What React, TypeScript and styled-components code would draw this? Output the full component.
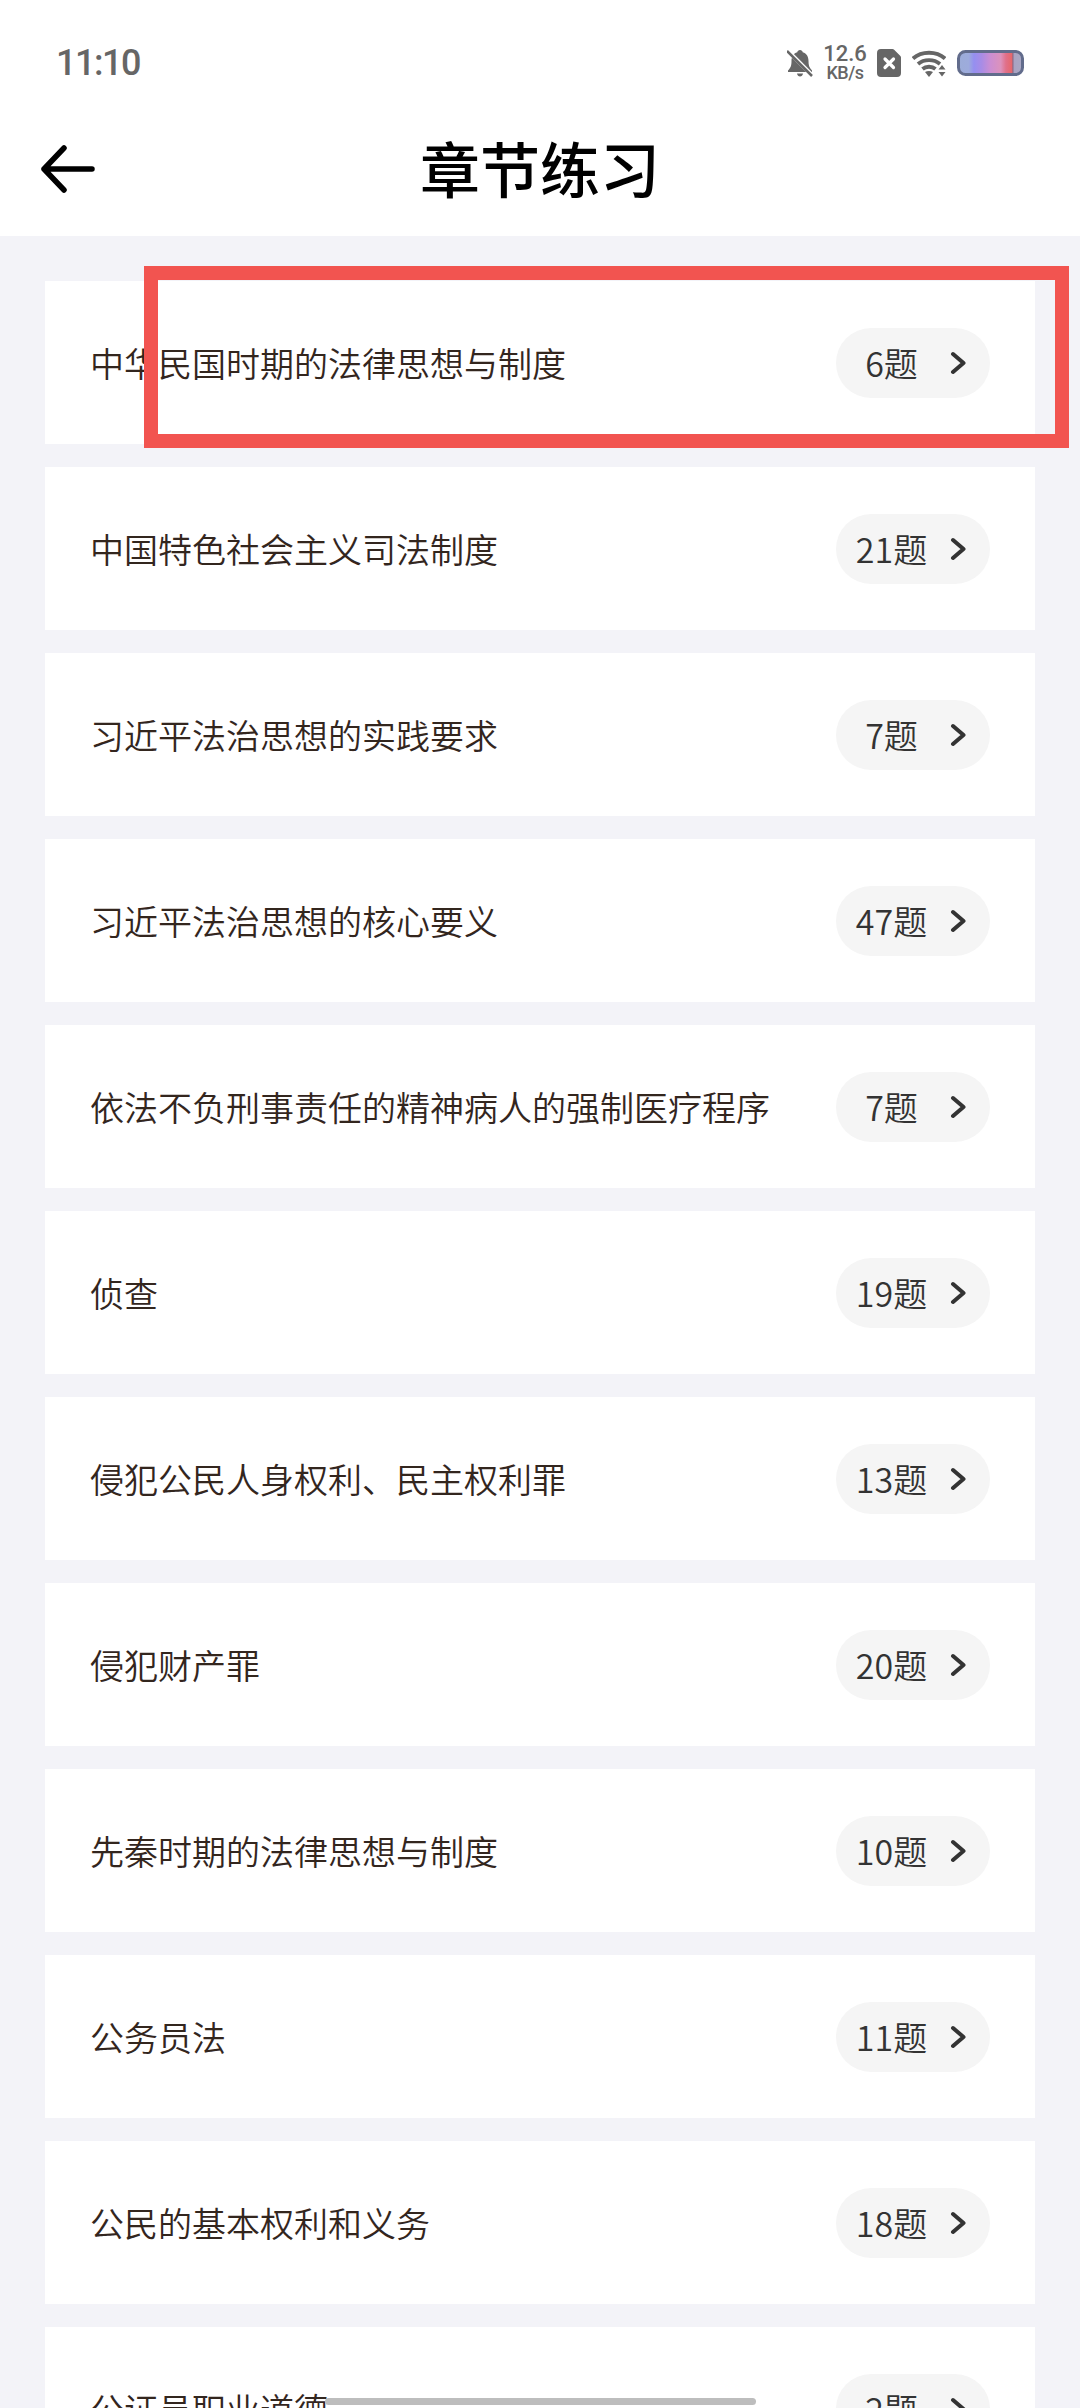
import React, { FC } from "react";
import styled, { createGlobalStyle } from "styled-components";

const GlobalStyle = createGlobalStyle`
  html, body {
    margin: 0;
    padding: 0;
    background: #f3f3f8;
  }
  body {
    font-family: "Noto Sans CJK SC", "Noto Sans", sans-serif;
  }
`;

const Page = styled.div`
  position: relative;
  width: 1080px;
  height: 2408px;
  overflow: hidden;
  background: #f3f3f8;
`;

const Top = styled.header`
  background: #fff;
  height: 236px;
  display: flex;
  flex-direction: column;
`;

const StatusBar = styled.div`
  height: 104px;
  padding: 22px 56px 0 56px;
  box-sizing: border-box;
  display: flex;
  align-items: center;
  justify-content: space-between;
`;

const Time = styled.span`
  font-family: "Roboto", sans-serif;
  font-size: 36px;
  font-weight: 500;
  letter-spacing: -1.5px;
  color: #666;
`;

const StatusIcons = styled.div`
  display: flex;
  align-items: center;
  gap: 11px;
`;

const Speed = styled.div`
  width: 42px;
  display: flex;
  flex-direction: column;
  align-items: center;
  font-family: "Roboto", sans-serif;
  font-weight: 500;
  color: #666;
  line-height: 19px;
`;

const SpeedValue = styled.span`
  font-size: 22px;
`;

const SpeedUnit = styled.span`
  font-size: 18px;
  letter-spacing: -0.5px;
`;

const TitleBar = styled.div`
  flex: 1;
  display: flex;
  align-items: center;
  justify-content: center;
  position: relative;
  padding-bottom: 8px;
`;

const BackButton = styled.div`
  position: absolute;
  left: 40px;
  top: 41px;
  width: 56px;
  height: 48px;
`;

const Title = styled.h1`
  margin: 0;
  font-size: 60px;
  font-weight: 500;
  color: #000;
`;

const List = styled.div`
  padding: 45px 45px 0;
  display: flex;
  flex-direction: column;
  gap: 23px;
`;

const Row = styled.div`
  height: 163px;
  flex-shrink: 0;
  background: #fff;
  display: flex;
  align-items: center;
  justify-content: space-between;
  padding: 0 45px 0 45px;
`;

const RowLabel = styled.span`
  font-size: 34px;
  font-weight: 350;
  color: #33261e;
`;

const Pill = styled.div`
  width: 154px;
  height: 70px;
  border-radius: 35px;
  background: #f5f5f5;
  display: flex;
  align-items: center;
`;

const Count = styled.span`
  width: 111px;
  margin-right: 3px;
  text-align: center;
  font-size: 34px;
  font-weight: 350;
  color: #333;
`;

const RedFrame = styled.div`
  position: absolute;
  left: 144px;
  top: 266px;
  width: 925px;
  height: 182px;
  box-sizing: border-box;
  border: 14px solid #f25450;
`;

const HomeBar = styled.div`
  position: absolute;
  left: 325px;
  top: 2398px;
  width: 431px;
  height: 7px;
  border-radius: 4px;
  background: #bdbdbd;
`;

const chapters = [
  { name: "中华民国时期的法律思想与制度", count: 6 },
  { name: "中国特色社会主义司法制度", count: 21 },
  { name: "习近平法治思想的实践要求", count: 7 },
  { name: "习近平法治思想的核心要义", count: 47 },
  { name: "依法不负刑事责任的精神病人的强制医疗程序", count: 7 },
  { name: "侦查", count: 19 },
  { name: "侵犯公民人身权利、民主权利罪", count: 13 },
  { name: "侵犯财产罪", count: 20 },
  { name: "先秦时期的法律思想与制度", count: 10 },
  { name: "公务员法", count: 11 },
  { name: "公民的基本权利和义务", count: 18 },
  { name: "公证员职业道德", count: 2 },
];

const Chevron: FC = () => (
  <svg width="16" height="24" viewBox="0 0 16 24" fill="none">
    <path d="M3 3 L13.500 12 L3 21" stroke="#333" strokeWidth="4" strokeLinecap="round" strokeLinejoin="round" />
  </svg>
);

const BellOff: FC = () => (
  <svg width="26" height="28" viewBox="0 0 26 28">
    <path d="M13 1c1.500 0 2.500 1 2.700 2.200C19.800 4.300 21.500 8 21.500 12c0 4 .6 6.500 3.500 9.500V23H1v-1.500C4 18.500 4.500 16 4.500 12 4.500 8 6.200 4.300 10.300 3.200 10.500 2 11.500 1 13 1z" fill="#666" />
    <path d="M10 24.500h6c-.3 1.800-1.500 3-3 3s-2.700-1.200-3-3z" fill="#666" />
    <path d="M0 1 L26 27" stroke="#fff" strokeWidth="4" />
    <path d="M0 2 L25 27" stroke="#666" strokeWidth="2.500" />
  </svg>
);

const SimOff: FC = () => (
  <svg width="24" height="28" viewBox="0 0 24 28">
    <path d="M4 0h11.500a2 2 0 0 1 1.400.6l6.500 6.500a2 2 0 0 1 .6 1.400V24a4 4 0 0 1-4 4H4a4 4 0 0 1-4-4V4a4 4 0 0 1 4-4z" fill="#666" />
    <path d="M8 10 L16.500 18.500 M16.500 10 L8 18.500" stroke="#fff" strokeWidth="3.200" strokeLinecap="round" />
  </svg>
);

const Wifi: FC = () => (
  <svg width="34" height="27" viewBox="0 0 34 27" fill="none">
    <path d="M1 8.500 C9.500 .8 24.500 .8 33 8.500" stroke="#666" strokeWidth="3.800" />
    <path d="M6 14 C12 8.800 22 8.800 28 14" stroke="#666" strokeWidth="3.800" />
    <path d="M10.500 19 C14 16 20 16 23.500 19" stroke="#666" strokeWidth="3.800" />
    <path d="M13 22 C15.500 20.500 18.500 20.500 21 22 L17 27 Z" fill="#666" />
    <path d="M26.500 19.500 L30 15 L33.500 19.500 Z M26.500 22 L33.500 22 L30 26.500 Z" fill="#666" />
  </svg>
);

const Battery: FC = () => (
  <svg width="67" height="26" viewBox="0 0 67 26">
    <defs>
      <linearGradient id="batteryFill" x1="0" x2="1" y1="0" y2="0">
        <stop offset="0" stopColor="#9cacd8" />
        <stop offset="0.16" stopColor="#9dabdc" />
        <stop offset="0.24" stopColor="#958ff0" />
        <stop offset="0.36" stopColor="#a88ce6" />
        <stop offset="0.5" stopColor="#cc8ed2" />
        <stop offset="0.66" stopColor="#dc92bc" />
        <stop offset="0.74" stopColor="#e0708a" />
        <stop offset="0.83" stopColor="#e6676c" />
        <stop offset="0.85" stopColor="#8a6a88" />
        <stop offset="0.87" stopColor="#a9a3c2" />
        <stop offset="1" stopColor="#a9a8c4" />
      </linearGradient>
    </defs>
    <rect x="1.500" y="1.500" width="64" height="23" rx="7" fill="url(#batteryFill)" stroke="#626c8c" strokeWidth="3" />
  </svg>
);

const BackArrow: FC = () => (
  <svg width="56" height="48" viewBox="0 0 56 48" fill="none">
    <path d="M24 3 L4 24 L24 45 M4 24 H52" stroke="#000" strokeWidth="5.500" strokeLinecap="round" strokeLinejoin="round" />
  </svg>
);

export default function App() {
  return (
    <Page>
      <GlobalStyle />
      <Top>
        <StatusBar>
          <Time>11:10</Time>
          <StatusIcons>
            <BellOff />
            <Speed>
              <SpeedValue>12.6</SpeedValue>
              <SpeedUnit>KB/s</SpeedUnit>
            </Speed>
            <SimOff />
            <Wifi />
            <Battery />
          </StatusIcons>
        </StatusBar>
        <TitleBar>
          <BackButton>
            <BackArrow />
          </BackButton>
          <Title>章节练习</Title>
        </TitleBar>
      </Top>
      <List>
        {chapters.map((c) => (
          <Row key={c.name}>
            <RowLabel>{c.name}</RowLabel>
            <Pill>
              <Count>{c.count}题</Count>
              <Chevron />
            </Pill>
          </Row>
        ))}
      </List>
      <RedFrame />
      <HomeBar />
    </Page>
  );
}
